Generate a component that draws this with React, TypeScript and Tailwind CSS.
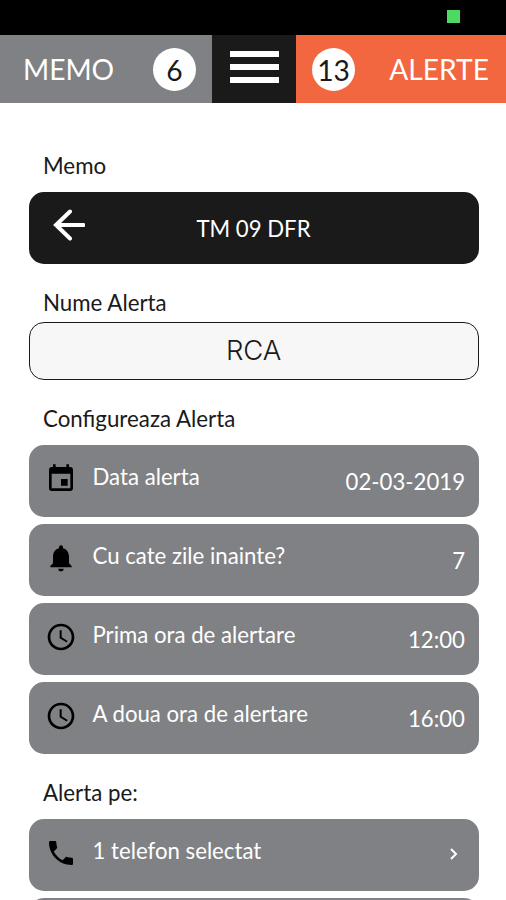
import { ReactNode } from "react";
import { MdInsertInvitation, MdNotifications, MdPhone, MdSchedule } from "react-icons/md";

interface RowProps {
  icon?: ReactNode;
  label: string;
  value?: ReactNode;
}

function Row({ icon, label, value }: RowProps) {
  return (
    <div className="flex h-[72px] shrink-0 rounded-[15px] bg-[#808184] pr-3.5 pl-4 text-[22.2px] leading-7 text-white">
      <div className="mt-[18px] w-8 text-[32px] text-black">{icon}</div>
      <p className="mt-[18px] ml-[15.5px] whitespace-nowrap">{label}</p>
      <div className="mt-[23px] ml-auto">{value}</div>
    </div>
  );
}

function Label({ children }: { children: ReactNode }) {
  return <p className="ml-3.5 pb-px text-[22.3px] leading-[27px] whitespace-nowrap text-[#1a1a1a]">{children}</p>;
}

const settings = [
  { label: "Data alerta", value: "02-03-2019", icon: <MdInsertInvitation /> },
  { label: "Cu cate zile inainte?", value: "7", icon: <MdNotifications /> },
  { label: "Prima ora de alertare", value: "12:00", icon: <MdSchedule /> },
  { label: "A doua ora de alertare", value: "16:00", icon: <MdSchedule /> },
];

export default function App() {
  return (
    <div className="flex h-[900px] w-[506px] flex-col overflow-hidden bg-white font-['Lato',sans-serif]">
      <div className="flex h-[35px] shrink-0 justify-end bg-black">
        <div className="mt-[10px] mr-[46px] size-[13px] bg-[#4cd964]" />
      </div>

      <header className="flex h-[68px] shrink-0 text-[28.2px] text-white">
        <div className="flex w-[212px] items-center justify-between bg-[#808184] pr-4 pl-[23px]">
          <span>MEMO</span>
          <span className="flex size-[43px] items-center justify-center rounded-full bg-white pt-0.5 text-[#1a1a1a]">6</span>
        </div>
        <button className="flex w-[84px] flex-col items-center gap-[7px] bg-[#1a1a1a] pt-4">
          <span className="h-1.5 w-[49px] bg-white" />
          <span className="h-1.5 w-[49px] bg-white" />
          <span className="h-1.5 w-[49px] bg-white" />
        </button>
        <div className="flex w-[210px] items-center justify-between bg-[#f26640] pr-[17px] pl-4">
          <span className="flex size-[43px] items-center justify-center rounded-full bg-white pt-0.5 text-[#1a1a1a]">13</span>
          <span>ALERTE</span>
        </div>
      </header>

      <main className="flex flex-col pt-[49px] pr-[27px] pl-[29px]">
        <Label>Memo</Label>
        <div className="mt-3 flex h-[72px] items-center rounded-[15px] bg-[#1a1a1a] pl-6 text-white">
          <svg
            className="mb-1.5 h-8 w-8"
            viewBox="0 0 32 32"
            fill="none"
            stroke="currentColor"
            strokeWidth="4"
            strokeLinecap="round"
          >
            <path d="M30.5 16H3M17 2.5 3 16l14 13.5" />
          </svg>
          <p className="mt-px mr-[57px] flex-1 text-center text-[22.2px]">TM 09 DFR</p>
        </div>

        <div className="mt-[25px]">
          <Label>Nume Alerta</Label>
        </div>
        <div className="mt-[5px] flex h-[58px] items-center justify-center rounded-[15px] border-[1.5px] border-[#1a1a1a] bg-[#f7f7f7] pr-px font-['Inter',sans-serif] text-[27.5px] font-light tracking-[-0.2px] text-[#1a1a1a]">
          RCA
        </div>

        <div className="mt-[25px]">
          <Label>Configureaza Alerta</Label>
        </div>
        <div className="mt-3 flex flex-col gap-[7.1px]">
          {settings.map((item) => (
            <Row key={item.label} icon={item.icon} label={item.label} value={item.value} />
          ))}
        </div>

        <div className="mt-[25px]">
          <Label>Alerta pe:</Label>
        </div>
        <div className="mt-3 flex flex-col gap-[7.1px]">
          <Row
            icon={<MdPhone />}
            label="1 telefon selectat"
            value={
              <svg className="mt-1.5 mr-[7px] h-3 w-2" viewBox="0 0 8 12" fill="none" stroke="white" strokeWidth="2">
                <path d="m1 1 5 5-5 5" />
              </svg>
            }
          />
          <Row label="" />
        </div>
      </main>
    </div>
  );
}
